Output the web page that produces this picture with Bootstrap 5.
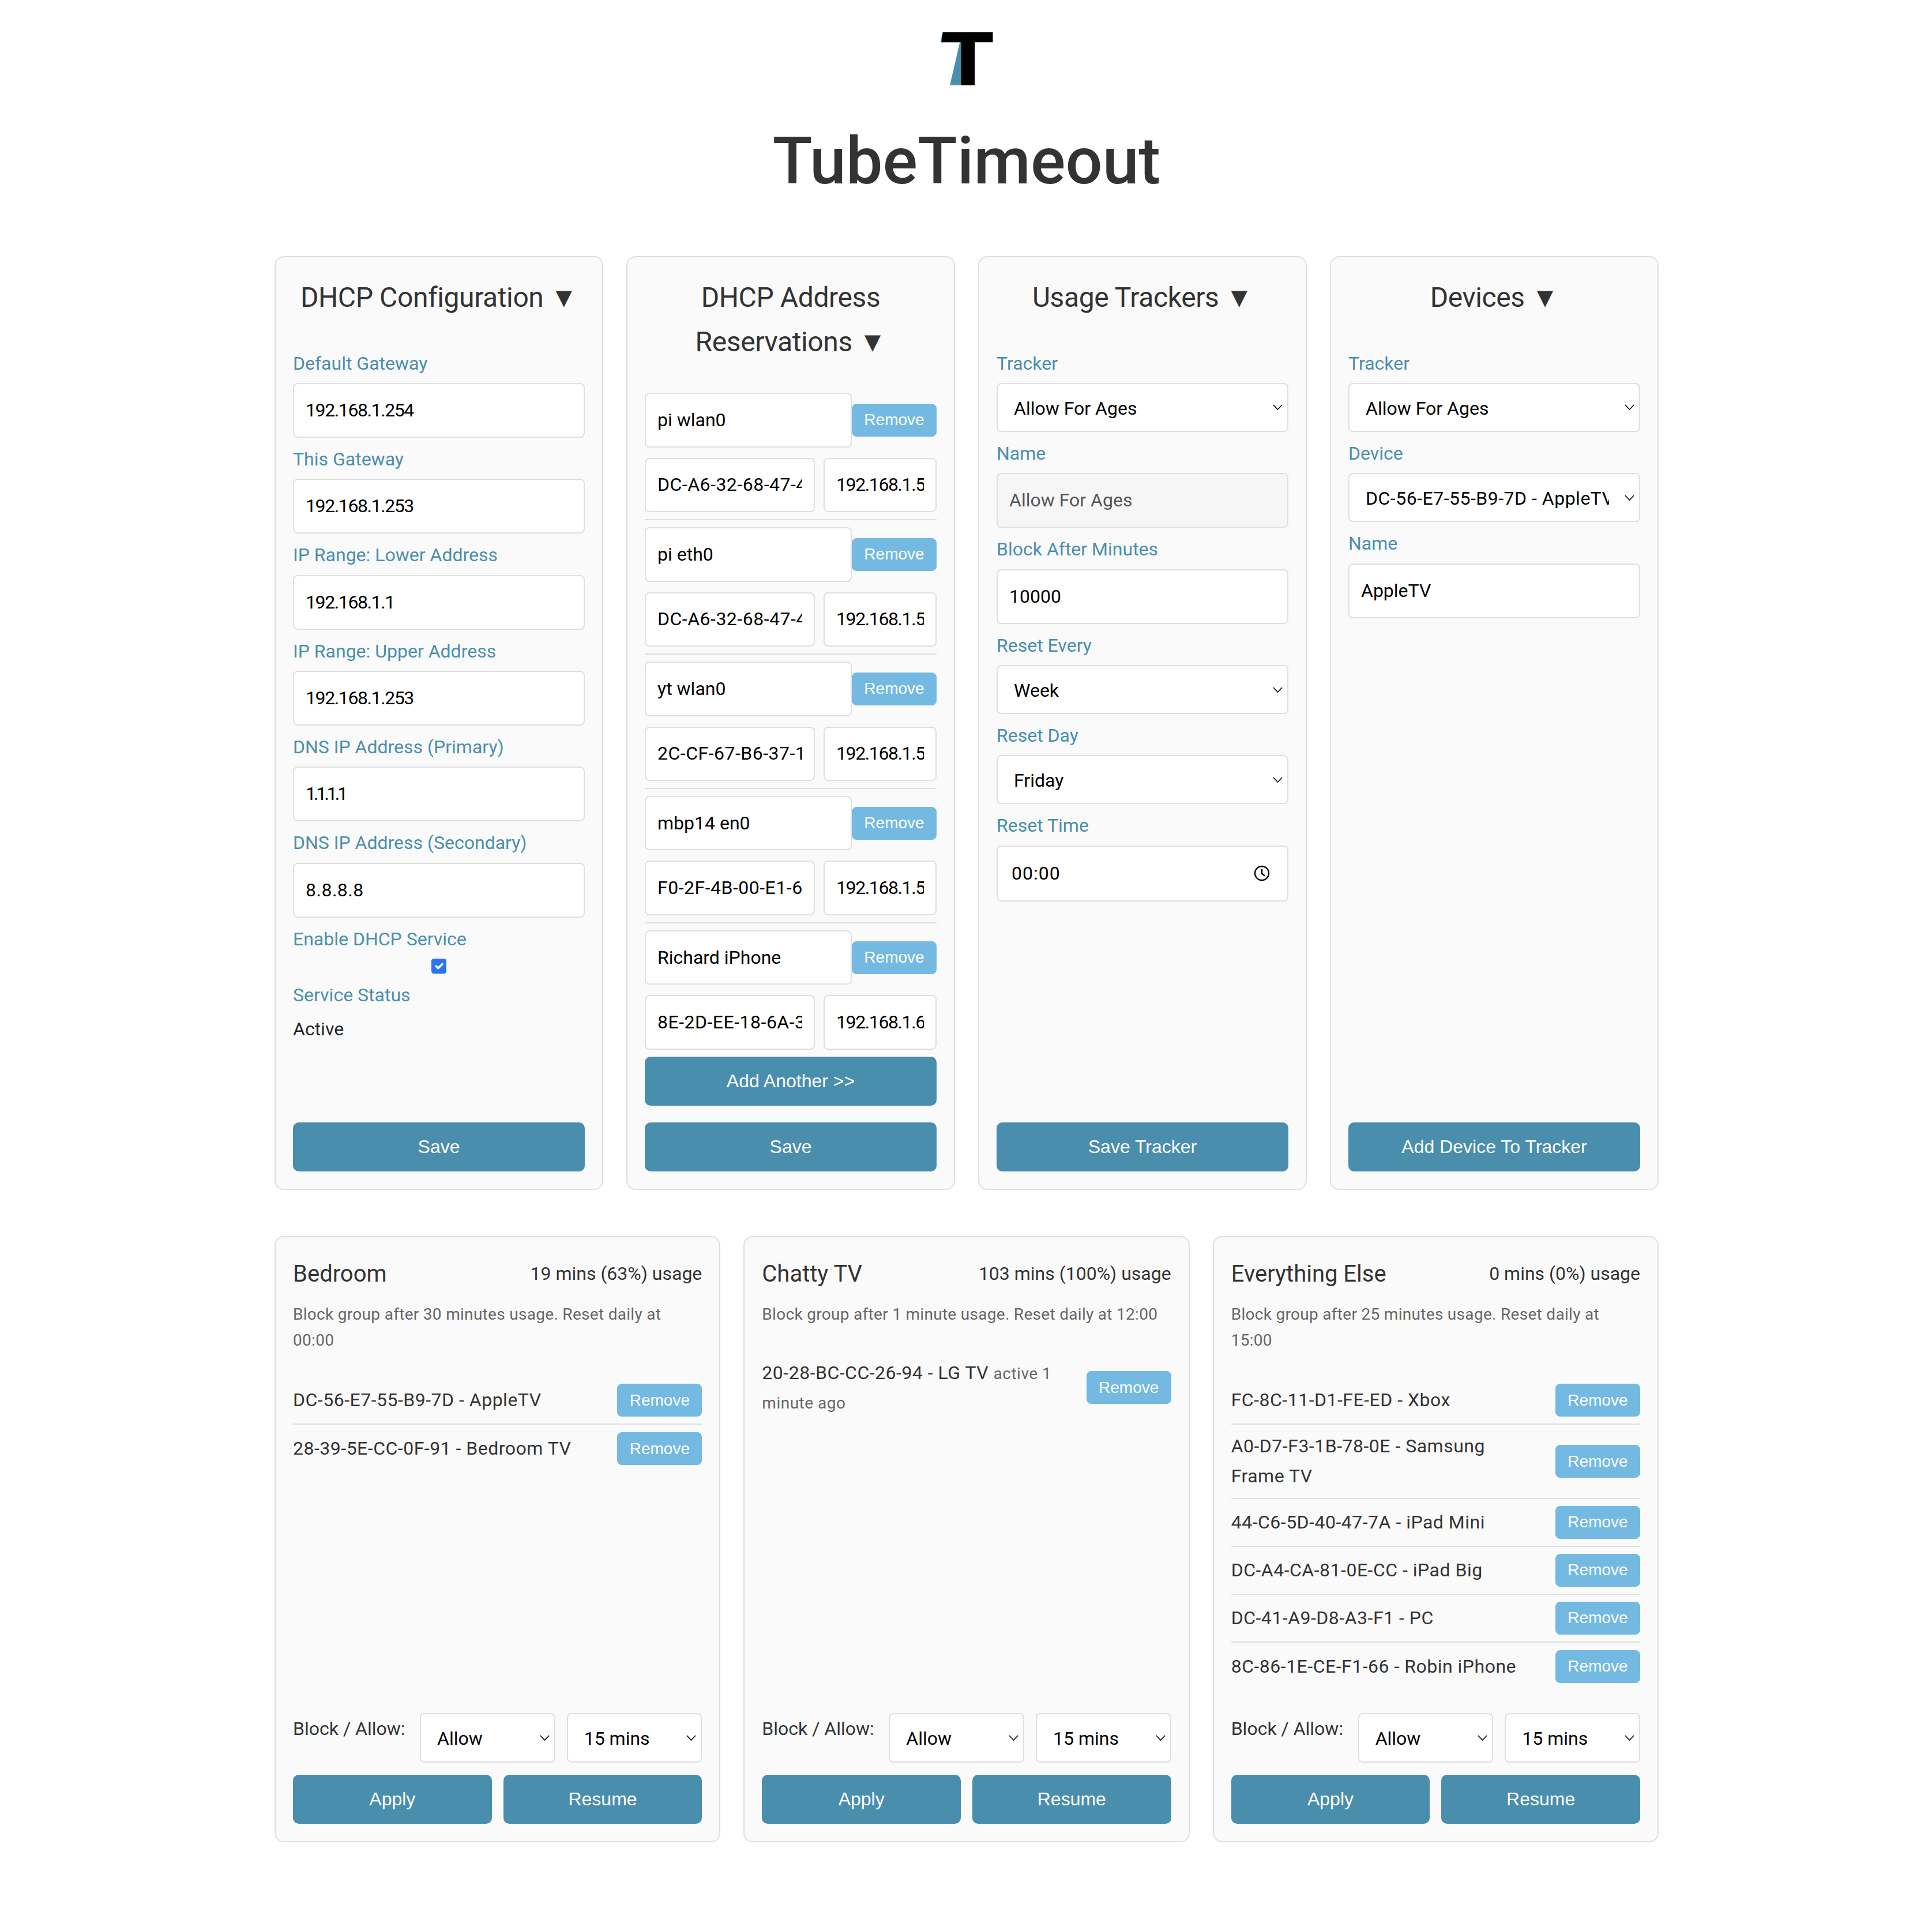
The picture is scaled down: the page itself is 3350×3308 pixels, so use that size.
<!doctype html>
<html lang="en">
  <head>
    <title>TubeTimeout</title>
    <meta charset="utf-8" />
    <meta name="viewport" content="width=device-width, initial-scale=1" />
    <link href="https://cdn.jsdelivr.net/npm/bootstrap@5.3.3/dist/css/bootstrap.min.css" rel="stylesheet" />
    <script src="https://cdn.jsdelivr.net/npm/bootstrap@5.3.3/dist/js/bootstrap.bundle.min.js"></script>
    <style>
      html {font-size: 32px;}
      body {font-family: Roboto, sans-serif; line-height: 1.6; color: #333; background: #fff;}
      .page-wrap {width: 2402px; padding-left: 2px; padding-top: 56px; padding-bottom: 112px;}
      .logo {width: 92px; height: 92px;}
      .big-title {font-size: 113px; line-height: 1.6; font-weight: 500; color: #333; margin: 42px 0 73px;}
      .tt-row {--bs-gutter-x: 40px; --bs-gutter-y: 80px;}
      .tt-panel {background: #fafafa; border: 2px solid #dfdfdf; border-radius: 16px;}
      .tt-panel .card-body {padding: 32px 30px 30px;}
      .top-panel {height: 1619px;}
      .low-panel {height: 1051px;}
      .panel-head {font-size: 48px; line-height: 1.6; font-weight: 400; color: #333; text-align: center; letter-spacing: -0.4px; margin-bottom: 50px;}
      .group-name {font-size: 40px; line-height: 1.6; font-weight: 400; color: #333; margin-bottom: 16px;}
      .usage-note {margin-bottom: 16px;}
      .tt-label {color: #4a8eae; margin-bottom: 8px; display: block;}
      .tt-field {font-size: 32px; line-height: 1.6; padding: 20px; color: #000; border: 2px solid #dfdfdf; border-radius: 8px;}
      .tt-field:disabled {background: #f6f6f6; color: #555;}
      .tt-pick {
        font-size: 32px; line-height: 1.6; padding: 17px 52px 13px 28px; color: #000;
        border: 2px solid #dfdfdf; border-radius: 8px;
        background-image: url("data:image/svg+xml,%3csvg xmlns='http://www.w3.org/2000/svg' viewBox='0 0 17 10'%3e%3cpath fill='none' stroke='%23000' stroke-width='1.6' d='M1 1l7.5 8L16 1'/%3e%3c/svg%3e");
        background-size: 17px 10px; background-position: right 8px center;
      }
      .tt-clock {
        background-image: url("data:image/svg+xml,%3csvg xmlns='http://www.w3.org/2000/svg' viewBox='0 0 28 28'%3e%3ccircle cx='14' cy='14' r='12' fill='none' stroke='%23000' stroke-width='2.4'/%3e%3cpath fill='none' stroke='%23000' stroke-width='2.4' d='M14 7v7.5l5 4'/%3e%3c/svg%3e");
        background-repeat: no-repeat; background-size: 28px 28px; background-position: right 30px center;
        padding: 21px 24px; letter-spacing: 1px;
      }
      .tt-ip {letter-spacing: -1.4px;}
      .tt-ones {letter-spacing: -4px;}
      .tt-mac {letter-spacing: 0.5px;}
      .field-gap {margin-bottom: 12px;}
      .tt-chk, .tt-chk:checked {width: 26px; height: 26px; margin: 0 auto; display: block; background-color: #2a75f6; border-color: #2a75f6; border-radius: 4px;}
      .tt-go {font-family: "Liberation Sans", Arial, sans-serif; font-size: 32px; line-height: 1.6; padding: 15px 24px; color: #fff; background: #4a8eae; border: 2px solid #4a8eae; border-radius: 10px;}
      .tt-rm {font-family: "Liberation Sans", Arial, sans-serif; font-size: 28px; line-height: 1.5; padding: 6.5px 20px; color: #fff; background: #74b9e2; border: 1px solid #74b9e2; border-radius: 8px; flex: none; width: 147px;}
      .res-name {flex: 1 1 0; min-width: 0; padding: 19.5px 20px;}
      .res-mac {width: 295px; padding: 19.5px 20px;}
      .res-ip {width: 196px; padding: 19.5px 20px;}
      .res-pair {margin-top: 18px;}
      .tt-rule {height: 2px; background: #dfdfdf; margin: 12px 0 12.6px;}
      .add-more {margin-top: 12px;}
      .blurb {font-size: 28px; line-height: 1.6; color: #666; letter-spacing: 0.3px; margin-bottom: 41px;}
      .dev-item {padding: 12px 0; border-bottom: 2px solid #dfdfdf; min-height: 83px;}
      .dev-item:last-child {border-bottom: 0;}
      .dev-text {width: 510px; letter-spacing: 0.5px;}
      .dev-seen {font-size: 28px; color: #666;}
      .ctl-label {width: 200px; flex: none; margin-top: 2px;}
      .ctl-pick {flex: 1 1 0; min-width: 0;}
      .ctl-gap {gap: 20px;}
      .ctl-btns {margin-top: 21px;}
      .ctl-btns .btn {flex: 1 1 0;}
    </style>
  </head>
  <body>
    <div class="page-wrap mx-auto">
      <div class="text-center">
        <svg class="logo d-block mx-auto" viewBox="-0.5 0 92 92">
          <polygon fill="#4a8eae" points="3.4,0 0.5,17.3 3,17.3 33.8,17.3 16.6,91.7 36,91.7 36,0" />
          <polygon fill="#000" points="4.6,0 91,0 91,17.3 59.7,17.3 59.7,91.7 36,91.7 36,17.3 1.7,17.3" />
        </svg>
        <h1 class="big-title">TubeTimeout</h1>
      </div>

      <div class="row tt-row">
        <div class="col-3">
          <div class="card tt-panel top-panel">
            <div class="card-body d-flex flex-column">
              <h4 class="panel-head">DHCP Configuration ▼</h4>
              <div class="field-gap">
                <label class="tt-label">Default Gateway</label>
                <input class="form-control tt-field tt-ip" type="text" value="192.168.1.254" />
              </div>
              <div class="field-gap">
                <label class="tt-label">This Gateway</label>
                <input class="form-control tt-field tt-ip" type="text" value="192.168.1.253" />
              </div>
              <div class="field-gap">
                <label class="tt-label">IP Range: Lower Address</label>
                <input class="form-control tt-field tt-ip" type="text" value="192.168.1.1" />
              </div>
              <div class="field-gap">
                <label class="tt-label">IP Range: Upper Address</label>
                <input class="form-control tt-field tt-ip" type="text" value="192.168.1.253" />
              </div>
              <div class="field-gap">
                <label class="tt-label">DNS IP Address (Primary)</label>
                <input class="form-control tt-field tt-ones" type="text" value="1.1.1.1" />
              </div>
              <div class="field-gap">
                <label class="tt-label">DNS IP Address (Secondary)</label>
                <input class="form-control tt-field tt-mac" type="text" value="8.8.8.8" />
              </div>
              <div class="field-gap">
                <label class="tt-label">Enable DHCP Service</label>
                <input class="form-check-input tt-chk" type="checkbox" checked />
              </div>
              <label class="tt-label">Service Status</label>
              <div class="text-dark">Active</div>
              <button class="btn tt-go w-100 mt-auto" type="button">Save</button>
            </div>
          </div>
        </div>

        <div class="col-3">
          <div class="card tt-panel top-panel">
            <div class="card-body d-flex flex-column">
              <h4 class="panel-head">DHCP Address Reservations ▼</h4>
              <div class="d-flex align-items-center">
                <input class="form-control tt-field res-name" type="text" value="pi wlan0" />
                <button class="btn tt-rm" type="button">Remove</button>
              </div>
              <div class="d-flex justify-content-between res-pair">
                <input class="form-control tt-field res-mac tt-mac" type="text" value="DC-A6-32-68-47-4F" />
                <input class="form-control tt-field res-ip tt-ip" type="text" value="192.168.1.52" />
              </div>
              <div class="tt-rule"></div>
              <div class="d-flex align-items-center">
                <input class="form-control tt-field res-name" type="text" value="pi eth0" />
                <button class="btn tt-rm" type="button">Remove</button>
              </div>
              <div class="d-flex justify-content-between res-pair">
                <input class="form-control tt-field res-mac tt-mac" type="text" value="DC-A6-32-68-47-4E" />
                <input class="form-control tt-field res-ip tt-ip" type="text" value="192.168.1.53" />
              </div>
              <div class="tt-rule"></div>
              <div class="d-flex align-items-center">
                <input class="form-control tt-field res-name" type="text" value="yt wlan0" />
                <button class="btn tt-rm" type="button">Remove</button>
              </div>
              <div class="d-flex justify-content-between res-pair">
                <input class="form-control tt-field res-mac tt-mac" type="text" value="2C-CF-67-B6-37-1A" />
                <input class="form-control tt-field res-ip tt-ip" type="text" value="192.168.1.54" />
              </div>
              <div class="tt-rule"></div>
              <div class="d-flex align-items-center">
                <input class="form-control tt-field res-name" type="text" value="mbp14 en0" />
                <button class="btn tt-rm" type="button">Remove</button>
              </div>
              <div class="d-flex justify-content-between res-pair">
                <input class="form-control tt-field res-mac tt-mac" type="text" value="F0-2F-4B-00-E1-6C" />
                <input class="form-control tt-field res-ip tt-ip" type="text" value="192.168.1.50" />
              </div>
              <div class="tt-rule"></div>
              <div class="d-flex align-items-center">
                <input class="form-control tt-field res-name" type="text" value="Richard iPhone" />
                <button class="btn tt-rm" type="button">Remove</button>
              </div>
              <div class="d-flex justify-content-between res-pair">
                <input class="form-control tt-field res-mac tt-mac" type="text" value="8E-2D-EE-18-6A-3B" />
                <input class="form-control tt-field res-ip tt-ip" type="text" value="192.168.1.6" />
              </div>
              <button class="btn tt-go w-100 add-more" type="button">Add Another &gt;&gt;</button>
              <button class="btn tt-go w-100 mt-auto" type="button">Save</button>
            </div>
          </div>
        </div>

        <div class="col-3">
          <div class="card tt-panel top-panel">
            <div class="card-body d-flex flex-column">
              <h4 class="panel-head">Usage Trackers ▼</h4>
              <div class="field-gap">
                <label class="tt-label">Tracker</label>
                <select class="form-select tt-pick"><option>Allow For Ages</option></select>
              </div>
              <div class="field-gap">
                <label class="tt-label">Name</label>
                <input class="form-control tt-field" type="text" value="Allow For Ages" disabled />
              </div>
              <div class="field-gap">
                <label class="tt-label">Block After Minutes</label>
                <input class="form-control tt-field" type="text" value="10000" />
              </div>
              <div class="field-gap">
                <label class="tt-label">Reset Every</label>
                <select class="form-select tt-pick"><option>Week</option></select>
              </div>
              <div class="field-gap">
                <label class="tt-label">Reset Day</label>
                <select class="form-select tt-pick"><option>Friday</option></select>
              </div>
              <div class="field-gap">
                <label class="tt-label">Reset Time</label>
                <input class="form-control tt-field tt-clock" type="text" value="00:00" />
              </div>
              <button class="btn tt-go w-100 mt-auto" type="button">Save Tracker</button>
            </div>
          </div>
        </div>

        <div class="col-3">
          <div class="card tt-panel top-panel">
            <div class="card-body d-flex flex-column">
              <h4 class="panel-head">Devices ▼</h4>
              <div class="field-gap">
                <label class="tt-label">Tracker</label>
                <select class="form-select tt-pick"><option>Allow For Ages</option></select>
              </div>
              <div class="field-gap">
                <label class="tt-label">Device</label>
                <select class="form-select tt-pick tt-mac"><option>DC-56-E7-55-B9-7D - AppleTV</option></select>
              </div>
              <div class="field-gap">
                <label class="tt-label">Name</label>
                <input class="form-control tt-field" type="text" value="AppleTV" />
              </div>
              <button class="btn tt-go w-100 mt-auto" type="button">Add Device To Tracker</button>
            </div>
          </div>
        </div>

        <div class="col-4">
          <div class="card tt-panel low-panel">
            <div class="card-body d-flex flex-column">
              <div class="d-flex justify-content-between align-items-center">
                <h5 class="group-name">Bedroom</h5>
                <span class="usage-note">19 mins (63%) usage</span>
              </div>
              <p class="blurb">Block group after 30 minutes usage. Reset daily at 00:00</p>
              <div>
                <div class="dev-item d-flex justify-content-between align-items-center">
                  <div class="dev-text">DC-56-E7-55-B9-7D - AppleTV</div>
                  <button class="btn tt-rm" type="button">Remove</button>
                </div>
                <div class="dev-item d-flex justify-content-between align-items-center">
                  <div class="dev-text">28-39-5E-CC-0F-91 - Bedroom TV</div>
                  <button class="btn tt-rm" type="button">Remove</button>
                </div>
              </div>
              <div class="d-flex ctl-gap mt-auto">
                <div class="ctl-label">Block / Allow:</div>
                <select class="form-select tt-pick ctl-pick"><option>Allow</option></select>
                <select class="form-select tt-pick ctl-pick"><option>15 mins</option></select>
              </div>
              <div class="d-flex ctl-gap ctl-btns">
                <button class="btn tt-go" type="button">Apply</button>
                <button class="btn tt-go" type="button">Resume</button>
              </div>
            </div>
          </div>
        </div>

        <div class="col-4">
          <div class="card tt-panel low-panel">
            <div class="card-body d-flex flex-column">
              <div class="d-flex justify-content-between align-items-center">
                <h5 class="group-name">Chatty TV</h5>
                <span class="usage-note">103 mins (100%) usage</span>
              </div>
              <p class="blurb">Block group after 1 minute usage. Reset daily at 12:00</p>
              <div>
                <div class="dev-item d-flex justify-content-between align-items-center">
                  <div class="dev-text">20-28-BC-CC-26-94 - LG TV <span class="dev-seen">active 1 minute ago</span></div>
                  <button class="btn tt-rm" type="button">Remove</button>
                </div>
              </div>
              <div class="d-flex ctl-gap mt-auto">
                <div class="ctl-label">Block / Allow:</div>
                <select class="form-select tt-pick ctl-pick"><option>Allow</option></select>
                <select class="form-select tt-pick ctl-pick"><option>15 mins</option></select>
              </div>
              <div class="d-flex ctl-gap ctl-btns">
                <button class="btn tt-go" type="button">Apply</button>
                <button class="btn tt-go" type="button">Resume</button>
              </div>
            </div>
          </div>
        </div>

        <div class="col-4">
          <div class="card tt-panel low-panel">
            <div class="card-body d-flex flex-column">
              <div class="d-flex justify-content-between align-items-center">
                <h5 class="group-name">Everything Else</h5>
                <span class="usage-note">0 mins (0%) usage</span>
              </div>
              <p class="blurb">Block group after 25 minutes usage. Reset daily at 15:00</p>
              <div>
                <div class="dev-item d-flex justify-content-between align-items-center">
                  <div class="dev-text">FC-8C-11-D1-FE-ED - Xbox</div>
                  <button class="btn tt-rm" type="button">Remove</button>
                </div>
                <div class="dev-item d-flex justify-content-between align-items-center">
                  <div class="dev-text">A0-D7-F3-1B-78-0E - Samsung Frame TV</div>
                  <button class="btn tt-rm" type="button">Remove</button>
                </div>
                <div class="dev-item d-flex justify-content-between align-items-center">
                  <div class="dev-text">44-C6-5D-40-47-7A - iPad Mini</div>
                  <button class="btn tt-rm" type="button">Remove</button>
                </div>
                <div class="dev-item d-flex justify-content-between align-items-center">
                  <div class="dev-text">DC-A4-CA-81-0E-CC - iPad Big</div>
                  <button class="btn tt-rm" type="button">Remove</button>
                </div>
                <div class="dev-item d-flex justify-content-between align-items-center">
                  <div class="dev-text">DC-41-A9-D8-A3-F1 - PC</div>
                  <button class="btn tt-rm" type="button">Remove</button>
                </div>
                <div class="dev-item d-flex justify-content-between align-items-center">
                  <div class="dev-text">8C-86-1E-CE-F1-66 - Robin iPhone</div>
                  <button class="btn tt-rm" type="button">Remove</button>
                </div>
              </div>
              <div class="d-flex ctl-gap mt-auto">
                <div class="ctl-label">Block / Allow:</div>
                <select class="form-select tt-pick ctl-pick"><option>Allow</option></select>
                <select class="form-select tt-pick ctl-pick"><option>15 mins</option></select>
              </div>
              <div class="d-flex ctl-gap ctl-btns">
                <button class="btn tt-go" type="button">Apply</button>
                <button class="btn tt-go" type="button">Resume</button>
              </div>
            </div>
          </div>
        </div>
      </div>
    </div>
  </body>
</html>
